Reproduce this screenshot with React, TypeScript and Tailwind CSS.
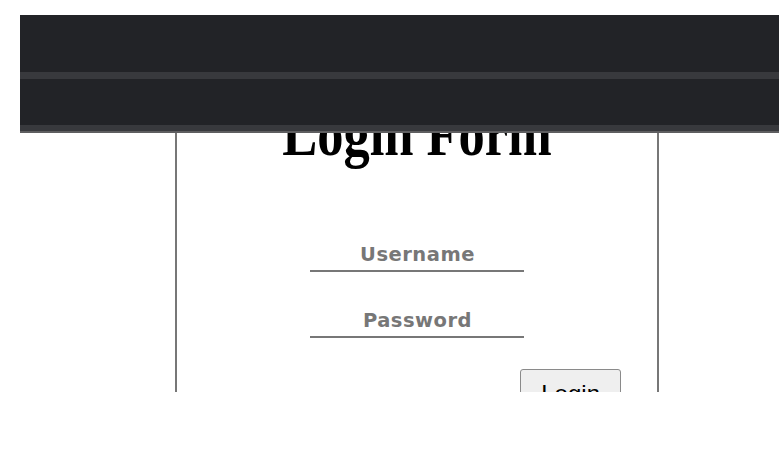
export default function App() {
  return (
    <div className="min-h-screen bg-white">
      <div className="relative ml-[20px] mt-[15px] h-[377px] overflow-hidden bg-white">
        {/* dark toolbar lying over the page */}
        <div className="absolute inset-x-0 top-0 z-10 flex flex-col">
          <div className="h-[57px] bg-[#222327]" />
          <div className="h-[7px] bg-[#38393d]" />
          <div className="h-[46px] bg-[#222327]" />
          <div className="h-[6px] bg-[#38393d]" />
          <div className="h-[2px] bg-[#5e5e60]" />
        </div>

        <div className="ml-[155px] mt-[131px] h-[400px] w-[484px] border-x-2 border-[#777]">
          <h1 className="-mt-[44px] scale-x-[0.82] text-center font-['Liberation_Serif','Times_New_Roman',serif] text-[64px] font-bold leading-none text-black">
            Login Form
          </h1>

          <form className="mt-[73px] flex flex-col font-['DejaVu_Sans','Liberation_Sans',sans-serif]">
            <input
              type="text"
              placeholder="Username"
              className="mx-auto block h-[33px] w-[214px] border-0 border-b-2 border-[#777] bg-transparent pl-[1px] text-center text-[19.5px] font-bold tracking-[0.5px] outline-none placeholder:text-[#777]"
            />
            <input
              type="password"
              placeholder="Password"
              className="mx-auto mt-[33px] block h-[33px] w-[214px] border-0 border-b-2 border-[#777] bg-transparent pl-[1px] text-center text-[19.5px] font-bold tracking-[0.5px] outline-none placeholder:text-[#777]"
            />
            <div className="mt-[31px] flex justify-end pr-[36px]">
              <button
                type="submit"
                className="rounded-[3px] border border-[#8a8a8a] bg-[#efefef] px-[20px] pt-[6px] pb-[6px] font-['Liberation_Sans',Arial,sans-serif] text-[24px] leading-normal text-black"
              >
                Login
              </button>
            </div>
          </form>
        </div>
      </div>
    </div>
  );
}
